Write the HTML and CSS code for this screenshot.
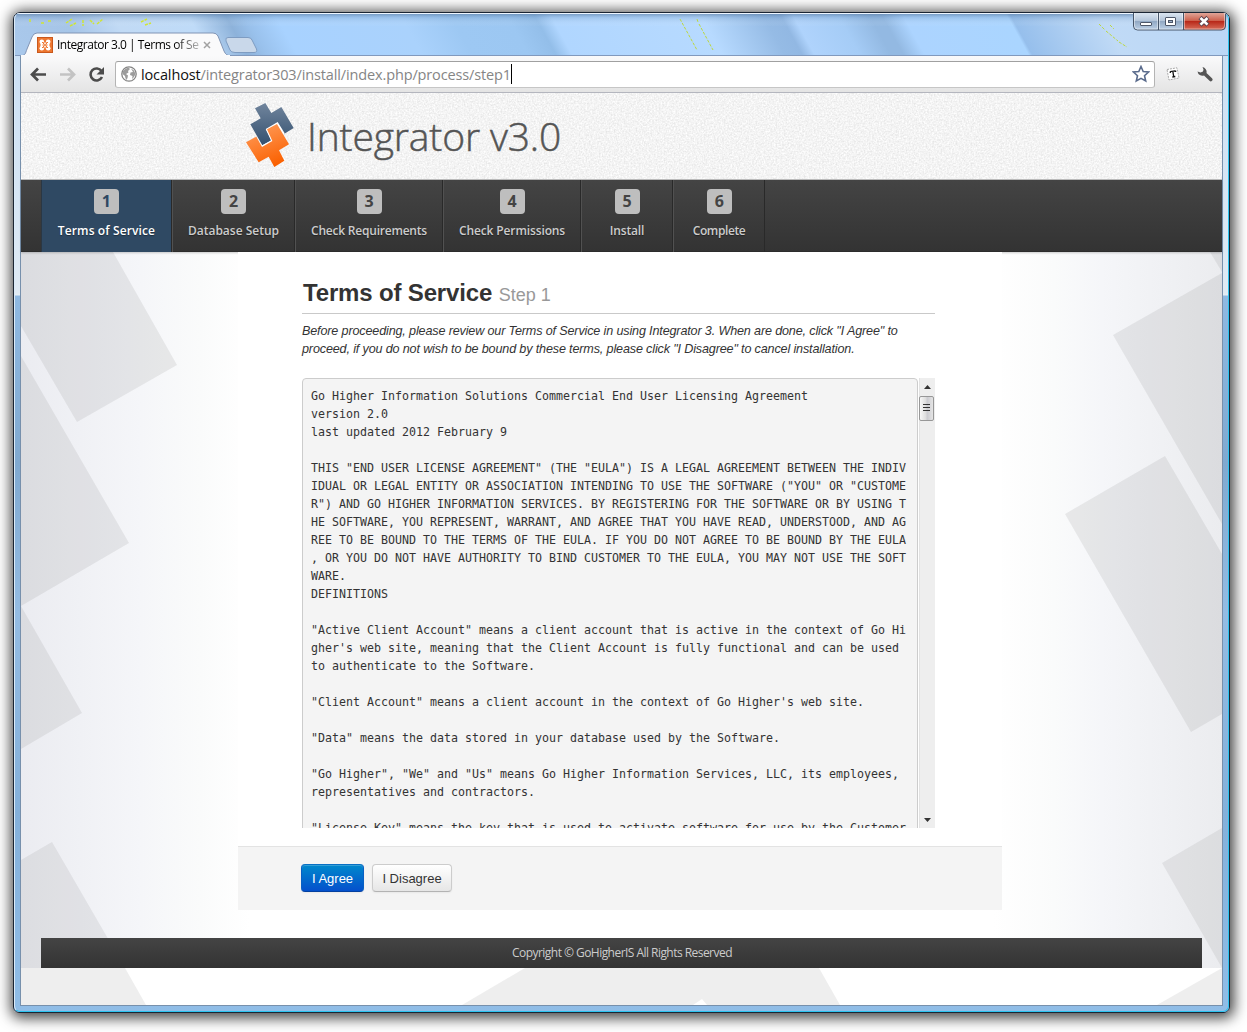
FILE: index.html
```html
<!DOCTYPE html>
<html lang="en">
<head>
<meta charset="utf-8">
<title>Integrator 3.0 | Terms of Service</title>
<link rel="stylesheet" href="styles.css">
</head>
<body>
<div class="window">
  <header class="titlebar">
    <svg class="glass" width="1215" height="43" viewBox="14 13 1215 43" preserveAspectRatio="none">
      <defs>
        <linearGradient id="sky" gradientUnits="userSpaceOnUse" x1="0" x2="1250" y1="0" y2="0">
          <stop offset="0" stop-color="#a9c8eb"/><stop offset=".05" stop-color="#a6c5e8"/><stop offset=".09" stop-color="#c1daf5"/>
          <stop offset=".15" stop-color="#bfdbf8"/><stop offset=".18" stop-color="#8db2da"/><stop offset=".195" stop-color="#99c1ec"/>
          <stop offset=".22" stop-color="#a8d2ff"/><stop offset=".32" stop-color="#aad2fc"/><stop offset=".36" stop-color="#9dc8f3"/>
          <stop offset=".405" stop-color="#9cc7f2"/><stop offset=".427" stop-color="#93bee9"/><stop offset=".44" stop-color="#b0d6ff"/>
          <stop offset=".56" stop-color="#b7daff"/><stop offset=".61" stop-color="#95bbe5"/><stop offset=".624" stop-color="#92b8e3"/>
          <stop offset=".634" stop-color="#afd3fc"/><stop offset=".67" stop-color="#a5ccf6"/><stop offset=".695" stop-color="#93b9e2"/>
          <stop offset=".705" stop-color="#93b9e2"/><stop offset=".722" stop-color="#acd4ff"/><stop offset=".805" stop-color="#aad5ff"/>
          <stop offset=".808" stop-color="#96bfec"/><stop offset=".88" stop-color="#c0daf6"/><stop offset="1" stop-color="#b9d6f6"/>
        </linearGradient>
        <linearGradient id="sheen" x1="0" x2="0" y1="0" y2="1">
          <stop offset="0" stop-color="#56789f" stop-opacity=".6"/><stop offset=".08" stop-color="#6288b2" stop-opacity=".25"/><stop offset=".3" stop-color="#fff" stop-opacity="0"/>
        </linearGradient>
      </defs>
      <rect x="-40" y="13" width="1350" height="43" fill="url(#sky)" transform="skewX(29) translate(-8 0)"/>
      <rect x="14" y="14" width="1215" height="42" fill="url(#sheen)"/>
      <path d="M14 13.5H1229" stroke="#eef6ff"/>
      <path d="M680 19L697 50M697 19l1 3M699 24l14 26M1099 24l6 6M1106 31l12 10M1119 42l8 5M1110 25l4 4" stroke="#bdd83c" stroke-dasharray="3 1.5" fill="none"/>
      <path d="M30 19v4M41 23h3M48 21h4M66 23l6-4M70 26l6-3M83 20v6M90 20l4 4M97 24l6-5M141 22l6-3M145 25l6-2" stroke="#d0e535" stroke-width="1.5" stroke-dasharray="3 1" fill="none"/>
      <path d="M14 55.5H1229" stroke="#8199bd"/>
      <path d="M226 41Q225 37.500 228 37.500H248Q251 37.500 252 40L256.500 49Q257.500 52.500 254 52.500H235Q231 52.500 230 50Z" fill="#c9d8ea" stroke="#7e9cc2"/>
      <path d="M20 56C26 55 25 54 27 49L32 37Q33.500 33 37 33H213Q216.500 33 218 36L224 51Q226 56 231 56Z" fill="#fafafb" stroke="#8094b5" stroke-width="1"/>
      <path d="M21 56H230" stroke="#fafafb" stroke-width="2"/>
    </svg>
    <div class="tab">
      <svg width="16" height="16" viewBox="0 0 16 16"><rect width="16" height="16" rx="1" fill="#ee7730"/><rect x=".5" y=".5" width="15" height="15" fill="none" stroke="#c9581c"/><path d="M4.500 4.500L11.500 11.500M11.500 4.500L4.500 11.500" stroke="#fff" stroke-width="2.600"/><circle cx="4.800" cy="4.800" r="2.300" fill="#fff"/><circle cx="11.200" cy="4.800" r="2.300" fill="#fff"/><circle cx="4.800" cy="11.200" r="2.300" fill="#fff"/><circle cx="11.200" cy="11.200" r="2.300" fill="#fff"/><path d="M3.500 6H5.500V10H3.500ZM10.500 6H12.500V10H10.500Z" fill="#fff"/><path d="M5 5.500H6.500V7.300H9.500V5.500H11M5 10.500H6.500V8.700H9.500V10.500H11" fill="none" stroke="#ee7730" stroke-width="1"/></svg>
      <span class="tab-title">Integrator 3.0 | Terms of Se</span>
      <svg class="tab-close" width="8" height="8" viewBox="0 0 8 8"><path d="M1 1l6 6M7 1L1 7" stroke="#a2a2a2" stroke-width="1.500"/></svg>
    </div>
    <div class="controls">
      <svg width="93" height="18" viewBox="0 0 93 18">
        <defs>
          <linearGradient id="wb" x1="0" x2="0" y1="0" y2="1"><stop offset="0" stop-color="#dbe5f0"/><stop offset=".45" stop-color="#b5c6da"/><stop offset=".5" stop-color="#92a9c4"/><stop offset="1" stop-color="#bdd1e7"/></linearGradient>
          <linearGradient id="wr" x1="0" x2="0" y1="0" y2="1"><stop offset="0" stop-color="#e0a598"/><stop offset=".45" stop-color="#cd604c"/><stop offset=".5" stop-color="#b9291a"/><stop offset="1" stop-color="#d8705b"/></linearGradient>
        </defs>
        <path d="M.5 0V13Q.5 17 4 17H51V0Z" fill="url(#wb)"/><path d="M51 0V17H89Q92.500 17 92.500 13V0Z" fill="url(#wr)"/>
        <path d="M.5 0V13Q.5 17 4.500 17H88.500Q92.500 17 92.500 13V0M25.500 0V17M50.500 0V17" fill="none" stroke="#465569"/>
        <path d="M1.500 0V13Q1.500 16 4.500 16H24.500V0M26.500 0V16H49.500V0M51.500 0V16H88Q91.500 16 91.500 13V0" fill="none" stroke="#fff" stroke-opacity=".45"/>
        <rect x="7.500" y="9.500" width="11" height="3" rx=".5" fill="#fff" stroke="#4d5769"/>
        <rect x="32.500" y="4.500" width="10" height="8" rx=".5" fill="#fff" stroke="#4d5769"/><rect x="35.500" y="7.500" width="4" height="2" fill="#9eb1c9" stroke="#4d5769"/>
        <path d="M67 4.500l8 7.500M75 4.500l-8 7.500" stroke="#5c4550" stroke-width="4.500"/><path d="M67.500 5l7 6.600M74.500 5l-7 6.600" stroke="#fff" stroke-width="2.600"/>
      </svg>
    </div>
  </header>

  <div class="frame">
    <div class="toolbar">
      <svg class="nav-icons" width="88" height="24" viewBox="26 62 88 24" fill="none">
        <path d="M46 74.500H33M38 68.500l-6 6 6 6" stroke="#4c4c4c" stroke-width="2.700"/>
        <path d="M60 74.500H73M68 68.500l6 6-6 6" stroke="#c3c3c3" stroke-width="2.700"/>
        <path d="M101.500 71A6 6 0 1 0 102 77" stroke="#4c4c4c" stroke-width="2.600"/><path d="M104 67v7.500h-7.500Z" fill="#4c4c4c"/>
      </svg>
      <div class="address">
        <svg width="16" height="16" viewBox="0 0 16 16"><circle cx="8" cy="8" r="7.200" fill="#fff" stroke="#858585" stroke-width="1.300"/><path d="M2 5Q4 2 7.500 1.500L9 3 7 5 7.500 6.500 5 8 7 9.500 6.500 12 5.500 14Q4 12 4 10L1.500 8ZM10 2.500L13 4.500 14.500 8 13 11 11 13 11.500 10 9 9 9.500 6.500 12 6Z" fill="#9c9c9c"/></svg>
        <span class="url"><b>localhost</b>/integrator303/install/index.php/process/step1</span><i class="caret"></i>
        <svg class="star" width="18" height="18" viewBox="0 0 18 18"><path d="M9 1.500L11.200 6.500 16.500 7 12.500 10.700 13.700 16 9 13.300 4.300 16 5.500 10.700 1.500 7 6.800 6.500Z" fill="#fff" stroke="#5a6b8c" stroke-width="1.600"/></svg>
      </div>
      <svg class="ext" width="14" height="14" viewBox="0 0 14 14"><path d="M1 2.500L11 .8 13 11 3 13Z" fill="#fff" stroke="#a8a8a8" stroke-dasharray="2 1"/><path d="M4.200 4.700l5-.9M6.800 4.200l.9 5.500M6.300 10l3-.5M4.300 4.500v1.500M9.600 3.600v1.500" stroke="#111" stroke-width="1.300"/></svg>
      <svg class="wrench" width="16" height="16" viewBox="0 0 16 16"><path d="M5.500 1A5 5 0 0 1 9.500 7L15 12.300A1.700 1.700 0 0 1 12.500 14.800L7 9.500A5 5 0 0 1 .5 5.500L3.500 6.500 6 5.500 6.500 3.500Z" fill="#555"/></svg>
    </div>

    <div class="page">
      <svg class="backdrop" width="1201" height="912" viewBox="21 93 1201 912">
        <defs>
          <linearGradient id="side" gradientUnits="userSpaceOnUse" x1="21" x2="1222" y1="0" y2="0">
            <stop offset="0" stop-color="#ebecf1"/><stop offset=".1" stop-color="#f5f6f9"/><stop offset=".15" stop-color="#fafbfb"/><stop offset=".19" stop-color="#fff"/>
            <stop offset=".81" stop-color="#fff"/><stop offset=".86" stop-color="#fafbfb"/><stop offset=".9" stop-color="#f5f6f9"/><stop offset="1" stop-color="#ebecef"/>
          </linearGradient>
        </defs>
        <rect x="21" y="93" width="1201" height="875" fill="url(#side)"/>
        <g fill="#777">
          <path d="M21 252H113L177 365 77 422 21 326ZM21 356L129 543 21 606ZM21 606L82 713 21 749Z" fill-opacity=".13"/>
          <path d="M1210 252H1222V272ZM1222 273L1113 335 1222 524ZM1165 456L1065 514 1191 732 1222 714V554Z" fill-opacity=".13"/>
          <path d="M21 860L52 842 125 968H21ZM1222 828L1162 863 1222 968ZM21 968H125L146 1005H21ZM1222 968L1157 1005H1222ZM525 968H819L840 1005H707L702 999 693 1005H462Z" fill-opacity=".12"/>
        </g>
      </svg>

      <div class="brand">
        <svg class="grain" width="1201" height="86"><filter id="grainy" x="0" y="0" width="100%" height="100%" color-interpolation-filters="sRGB"><feTurbulence type="fractalNoise" baseFrequency=".6" numOctaves="2" seed="4"/><feColorMatrix values=".16 0 0 0 .875  .16 0 0 0 .875  .16 0 0 0 .875  0 0 0 0 1"/></filter><rect width="1201" height="86" filter="url(#grainy)"/></svg>
        <svg class="mark" width="54" height="70" viewBox="40 30 162 210">
          <defs>
            <linearGradient id="blue" x1="0" x2="0" y1="0" y2="1"><stop offset="0" stop-color="#71859d"/><stop offset="1" stop-color="#33506f"/></linearGradient>
            <linearGradient id="orange" x1=".2" x2=".6" y1="0" y2="1"><stop offset="0" stop-color="#ff9d5c"/><stop offset="1" stop-color="#fa6000"/></linearGradient>
          </defs>
          <path d="M76 55L107 39 125 69 155 51 192 114 163 132 143 98 109 119 126 151 98 166 62 103 93 85Z" fill="url(#blue)"/>
          <path d="M97 170L128 153 112 118 143 100 163 132" fill="none" stroke="#fff" stroke-width="6"/>
          <path d="M112 118L142 102 178 163 148 181 164 212 134 231 117 200 87 217 49 157 80 140 97 171 128 153Z" fill="url(#orange)"/>
        </svg>
        <span class="brand-name">Integrator v3.0</span>
      </div>

      <nav class="steps">
        <a class="step step-tos active"><b>1</b><span>Terms of Service</span></a>
        <a class="step step-db"><b>2</b><span>Database Setup</span></a>
        <a class="step step-req"><b>3</b><span>Check Requirements</span></a>
        <a class="step step-perm"><b>4</b><span>Check Permissions</span></a>
        <a class="step step-install"><b>5</b><span>Install</span></a>
        <a class="step step-done"><b>6</b><span>Complete</span></a>
      </nav>

      <main class="content">
        <section class="body">
          <h2><span class="title">Terms of Service</span> <small>Step 1</small></h2>
          <p class="intro">Before proceeding, please review our Terms of Service in using Integrator 3. When are done, click "I Agree" to<br>proceed, if you do not wish to be bound by these terms, please click "I Disagree" to cancel installation.</p>
          <div class="license">
<pre>Go Higher Information Solutions Commercial End User Licensing Agreement
version 2.0
last updated 2012 February 9

THIS "END USER LICENSE AGREEMENT" (THE "EULA") IS A LEGAL AGREEMENT BETWEEN THE INDIV
IDUAL OR LEGAL ENTITY OR ASSOCIATION INTENDING TO USE THE SOFTWARE ("YOU" OR "CUSTOME
R") AND GO HIGHER INFORMATION SERVICES. BY REGISTERING FOR THE SOFTWARE OR BY USING T
HE SOFTWARE, YOU REPRESENT, WARRANT, AND AGREE THAT YOU HAVE READ, UNDERSTOOD, AND AG
REE TO BE BOUND TO THE TERMS OF THE EULA. IF YOU DO NOT AGREE TO BE BOUND BY THE EULA
, OR YOU DO NOT HAVE AUTHORITY TO BIND CUSTOMER TO THE EULA, YOU MAY NOT USE THE SOFT
WARE.
DEFINITIONS

"Active Client Account" means a client account that is active in the context of Go Hi
gher's web site, meaning that the Client Account is fully functional and can be used 
to authenticate to the Software.

"Client Account" means a client account in the context of Go Higher's web site.

"Data" means the data stored in your database used by the Software.

"Go Higher", "We" and "Us" means Go Higher Information Services, LLC, its employees, 
representatives and contractors.

"License Key" means the key that is used to activate software for use by the Customer
</pre>
            <div class="scrollbar">
              <svg width="17" height="17" viewBox="0 0 17 17"><path d="M5 11L8.500 7 12 11Z" fill="#333"/></svg>
              <div class="thumb"><i></i><i></i><i></i></div>
              <svg class="down" width="17" height="17" viewBox="0 0 17 17"><path d="M5 7L8.500 11 12 7Z" fill="#333"/></svg>
            </div>
          </div>
        </section>
        <div class="actions"><button class="btn primary">I Agree</button><button class="btn">I Disagree</button></div>
      </main>

      <footer class="footer"><span>Copyright © GoHigherIS All Rights Reserved</span></footer>
    </div>
  </div>
</div>
</body>
</html>
```
FILE: styles.css
```css
* { box-sizing: border-box; }
body { margin: 0; background: #fff; height: 1032px; overflow: hidden; font: 13px/18px "Liberation Sans", Arial, sans-serif; color: #333; padding: 12px 0 0 13px; }
.window {
  width: 1217px; height: 1001px; border: 1px solid #1b2533; border-radius: 7px 7px 6px 6px; overflow: hidden;
  background: linear-gradient(#c8def5 0, #dfeaf4 280px, #e6eef5 282px, #8fb9e2 283px, #80a9d0 450px, #94bce3 600px, #84b0da 800px, #90bde7);
  box-shadow: 1px 2px 14px 3px rgba(0,0,0,.75); position: relative; display: flex; flex-direction: column;
}
.window::after { content: ""; position: absolute; inset: 0; border: 1px solid; border-color: transparent #2cc4f0 #2cc4f0 #dcebf8; border-radius: 6px; pointer-events: none; }
.titlebar { position: relative; height: 43px; flex: none; display: flex; justify-content: space-between; }
.glass { position: absolute; left: 0; top: 0; }
.tab { position: relative; display: flex; align-items: center; margin: 22px 0 0 23px; height: 19px; width: 175px; }
.tab-title { font: 12px/19px "Open Sans", sans-serif; margin-left: 4px; width: 142px; white-space: nowrap; letter-spacing: -.48px; background: linear-gradient(90deg, #000 118px, #bbb 142px); -webkit-background-clip: text; background-clip: text; color: transparent; }
.tab-close { margin-left: 4px; }
.controls { position: relative; margin-right: 3px; height: 18px; }
.controls svg { display: block; }
.frame { flex: none; width: 1203px; height: 950px; margin-left: 6px; border: 1px solid #7790ac; border-top: 0; display: flex; flex-direction: column; background: #fff; }
.toolbar { height: 37px; flex: none; display: flex; align-items: center; background: linear-gradient(#fafafb, #e4e4e4); border-bottom: 1px solid #b4b6be; padding-left: 5px; }
.nav-icons { flex: none; }
.address { width: 1040px; height: 27px; margin-left: 1px; border: 1px solid #a9a9a9; border-color: #a0a0a0 #b4b4b4 #c6c6c6; border-radius: 3px; background: #fff; display: flex; align-items: center; padding: 0 4px 0 5px; }
.address svg { flex: none; }
.url { font: 14.500px/24px "Open Sans", sans-serif; color: #858585; margin: 1px 0 0 4px; width: 370px; white-space: nowrap; letter-spacing: -.13px; }
.url b { font-weight: 400; color: #111; }
.caret { width: 1px; height: 20px; background: #000; }
.address .star { margin-left: auto; }
.ext { margin-left: 11px; }
.wrench { margin-left: 17px; }
.page { position: relative; height: 912px; display: flex; flex-direction: column; }
.backdrop { position: absolute; left: 0; top: 0; }
.brand { position: relative; height: 87px; border-bottom: 1px solid #bdbdbd; display: flex; padding: 7px 0 0 222px; flex: none; }
.grain { position: absolute; left: 0; top: 0; }
.mark { position: relative; }
.brand-name { position: relative; font: 300 39px/70px "Open Sans", sans-serif; color: #555; -webkit-text-stroke: .5px #555; margin: 1px 0 0 10px; white-space: nowrap; letter-spacing: -.15px; }
.steps { position: relative; flex: none; height: 72px; display: flex; background: linear-gradient(#444, #333); border-bottom: 1px solid #2c2c2c; padding-left: 20px; box-shadow: 0 1px 2px rgba(0,0,0,.2); }
.step { height: 72px; border-right: 1px solid #292929; border-left: 1px solid #515151; display: flex; flex-direction: column; align-items: center; padding-top: 9px; color: #ccc; font: 600 12px/16px "Open Sans", sans-serif; text-shadow: 0 1px 1px rgba(0,0,0,.4); white-space: nowrap; }
.step b { width: 25px; height: 25px; border-radius: 4px; background: #bebebe; color: #444; font: 700 16px/25px "Open Sans", sans-serif; text-align: center; text-shadow: none; }
.step span { margin-top: 9px; }
.step.active { background: #2f4963; color: #fff; border-left-color: #2b3743; }
.step.active b { color: #2f4963; }
.step-tos { width: 131px; letter-spacing: .12px; }
.step-db { width: 123px; }
.step-req { width: 148px; letter-spacing: -.22px; }
.step-perm { width: 138px; letter-spacing: -.12px; }
.step-install { width: 92px; letter-spacing: -.15px; }
.step-done { width: 92px; letter-spacing: -.4px; }
.content { position: relative; flex: none; width: 764px; margin-left: 217px; height: 658px; background: #fff; }
.body { height: 594px; padding: 23px 67px 0 64px; }
h2 { margin: 0; height: 39px; border-bottom: 1px solid #c9c9c9; font-size: 24px; line-height: 36px; white-space: nowrap; padding-left: 1px; }
.title { letter-spacing: -.16px; }
h2 small { font-size: 18px; font-weight: 400; color: #999; }
.intro { margin: 8px 0 20px; font-size: 12.600px; font-style: italic; white-space: nowrap; letter-spacing: -.15px; }
.license { width: 633px; height: 450px; overflow: hidden; display: flex; }
.license pre { width: 616px; height: 500px; flex: none; margin: 0; border: 1px solid #ccc; border-radius: 4px; background: #f4f4f4; padding: 8px; font: 11.630px/18px "DejaVu Sans Mono", monospace; color: #333; }
.scrollbar { width: 16px; margin-left: 1px; height: 450px; background: #eee; border-left: 1px solid #e2e2e2; display: flex; flex-direction: column; }
.scrollbar svg { flex: none; margin-left: -1px; }
.thumb { width: 15px; height: 25px; flex: none; margin-left: -1px; border: 1px solid #979797; border-radius: 2px; background: linear-gradient(90deg, #f7f7f7, #ddd 45%, #cbcbd0 55%, #e5e5e5); margin-top: 1px; padding: 7px 0 0 3px; }
.thumb i { display: block; width: 7px; height: 1px; margin-bottom: 2px; background: #333; }
.scrollbar .down { margin-top: auto; }
.actions { height: 64px; background: #f4f4f4; border-top: 1px solid #e3e3e3; padding: 17px 0 0 63px; display: flex; gap: 8px; }
.btn { font: 13px/18px "Liberation Sans", Arial, sans-serif; width: 80px; height: 28px; padding: 1px 0 0; border: 1px solid #ccc; border-bottom-color: #b3b3b3; border-radius: 4px; background: linear-gradient(#fff, #e6e6e6); color: #333; box-shadow: inset 0 1px 0 rgba(255,255,255,.2), 0 1px 2px rgba(0,0,0,.05); }
.btn.primary { width: 63px; color: #fff; background: linear-gradient(#08c, #0450cc); border-color: #0870c4 #0860c4 #0440a0; }
.footer { position: relative; flex: none; margin: 28px 20px 0; height: 30px; background: linear-gradient(#444, #333); text-align: center; color: #ccc; font: 12px/30px "Open Sans", sans-serif; letter-spacing: -.54px; padding-left: 1px; }
```
